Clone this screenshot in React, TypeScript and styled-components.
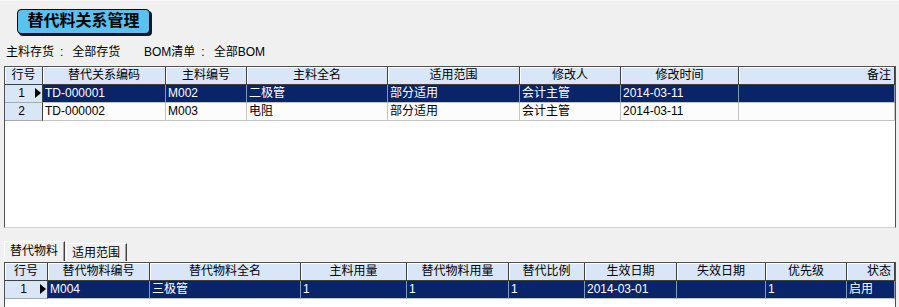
import React from 'react';
import styled, { createGlobalStyle } from 'styled-components';

const GlobalStyle = createGlobalStyle`
  body {
    margin: 0;
    background: #f0f0f0;
    font-family: "Liberation Sans", "Noto Sans CJK SC", sans-serif;
    font-size: 12px;
    color: #000;
  }
`;

const Page = styled.div`
  width: 899px;
  height: 307px;
  overflow: hidden;
  border-top: 1px solid #fafafa;
  box-sizing: border-box;
`;

const TitleArea = styled.div`
  height: 44px;
  padding: 8px 0 0 17px;
  box-sizing: border-box;
`;

const TitleButton = styled.div`
  display: inline-block;
  width: 131px;
  height: 23px;
  background: #5ac2ee;
  border: 1px solid #000;
  border-radius: 4px;
  box-shadow: 2px 2px 0 #0c1a33;
  font-size: 16px;
  font-weight: bold;
  line-height: 22px;
  text-align: center;
`;

const FilterLine = styled.div`
  display: flex;
  height: 21px;
  padding-left: 6px;
  line-height: 14px;
`;

const FilterItem = styled.div<{ $width?: number }>`
  display: flex;
  width: ${(p) => (p.$width ? `${p.$width}px` : 'auto')};
`;

const Colon = styled.span`
  margin: 0 9px 0 6px;
`;

const Grid = styled.div<{ $height: number }>`
  margin-left: 4px;
  width: 892px;
  height: ${(p) => p.$height}px;
  box-sizing: border-box;
  background: #fff;
  border-top: 1px solid #505050;
  border-left: 1px solid #505050;
  border-right: 1px solid #505050;
  border-bottom: 1px solid #d4d4d4;
  overflow: hidden;
`;

const Row = styled.div<{ $cols: string; $selected?: boolean }>`
  display: grid;
  grid-template-columns: ${(p) => p.$cols};
  height: 18px;
  background: ${(p) => (p.$selected ? '#0a246a' : '#fcfcfc')};
  color: ${(p) => (p.$selected ? '#fff' : '#000')};
`;

const HeadCell = styled.div<{ $align?: string }>`
  box-sizing: border-box;
  background: #d9e6f7;
  border-right: 1px solid #404040;
  border-bottom: 1px solid #404040;
  box-shadow: inset 1px 1px 0 #fff;
  text-align: ${(p) => p.$align || 'center'};
  padding: 0 3px;
  line-height: 17px;
  white-space: nowrap;
  overflow: hidden;
`;

const Cell = styled.div<{ $selected?: boolean }>`
  box-sizing: border-box;
  border-right: 1px solid ${(p) => (p.$selected ? '#8896b8' : '#c4c4c4')};
  border-bottom: 1px solid #c4c4c4;
  padding-left: 2px;
  line-height: 17px;
  white-space: nowrap;
  overflow: hidden;
`;

const RowHead = styled.div<{ $pad: number }>`
  position: relative;
  box-sizing: border-box;
  background: #d9e6f7;
  color: #000;
  border-right: 1px solid #404040;
  border-bottom: 1px solid #a8a8a8;
  text-align: right;
  padding-right: ${(p) => p.$pad}px;
  line-height: 17px;
`;

const Arrow = styled.span`
  position: absolute;
  right: 1px;
  top: 3px;
  width: 0;
  height: 0;
  border-left: 6px solid #000;
  border-top: 5px solid transparent;
  border-bottom: 5px solid transparent;
`;

const TabStrip = styled.div`
  display: flex;
  align-items: flex-end;
  height: 20px;
  margin-top: 13px;
  margin-bottom: 1px;
  padding-left: 4px;
`;

const Tab = styled.div<{ $active?: boolean }>`
  box-sizing: border-box;
  height: ${(p) => (p.$active ? 20 : 18)}px;
  padding: 0 6px 0 5px;
  margin-right: 1px;
  border-top: 1px solid #fff;
  border-left: 1px solid #fff;
  border-right: 1px solid #404040;
  box-shadow: inset -1px 0 0 #a0a0a0;
  line-height: 18px;
`;

const topCols = '38px 123px 81px 141px 132px 101px 118px 1fr';
const bottomCols = '43px 102px 151px 106px 102px 76px 92px 89px 81px 1fr';

const topHeaders = ['行号', '替代关系编码', '主料编号', '主料全名', '适用范围', '修改人', '修改时间', '备注'];
const topRows = [
  ['TD-000001', 'M002', '二极管', '部分适用', '会计主管', '2014-03-11', ''],
  ['TD-000002', 'M003', '电阻', '部分适用', '会计主管', '2014-03-11', ''],
];

const bottomHeaders = ['行号', '替代物料编号', '替代物料全名', '主料用量', '替代物料用量', '替代比例', '生效日期', '失效日期', '优先级', '状态'];
const bottomRows = [['M004', '三极管', '1', '1', '1', '2014-03-01', '', '1', '启用']];

type TableProps = {
  cols: string;
  headers: string[];
  rows: string[][];
  height: number;
  numPad: number;
};

const DataGrid: React.FC<TableProps> = ({ cols, headers, rows, height, numPad }) => (
  <Grid $height={height}>
    <Row $cols={cols}>
      {headers.map((h, i) => (
        <HeadCell key={h} $align={i === headers.length - 1 ? 'right' : 'center'}>
          {h}
        </HeadCell>
      ))}
    </Row>
    {rows.map((r, i) => (
      <Row key={i} $cols={cols} $selected={i === 0}>
        <RowHead $pad={numPad}>
          {i + 1}
          {i === 0 && <Arrow />}
        </RowHead>
        {r.map((c, j) => (
          <Cell key={j} $selected={i === 0}>
            {c}
          </Cell>
        ))}
      </Row>
    ))}
  </Grid>
);

const App: React.FC = () => (
  <Page>
    <GlobalStyle />
    <TitleArea>
      <TitleButton>替代料关系管理</TitleButton>
    </TitleArea>
    <FilterLine>
      <FilterItem $width={138}>
        <span>主料存货</span>
        <Colon>:</Colon>
        <span>全部存货</span>
      </FilterItem>
      <FilterItem>
        <span>BOM清单</span>
        <Colon>:</Colon>
        <span>全部BOM</span>
      </FilterItem>
    </FilterLine>
    <DataGrid cols={topCols} headers={topHeaders} rows={topRows} height={162} numPad={17} />
    <TabStrip>
      <Tab $active>替代物料</Tab>
      <Tab>适用范围</Tab>
    </TabStrip>
    <DataGrid cols={bottomCols} headers={bottomHeaders} rows={bottomRows} height={46} numPad={20} />
  </Page>
);

export default App;
